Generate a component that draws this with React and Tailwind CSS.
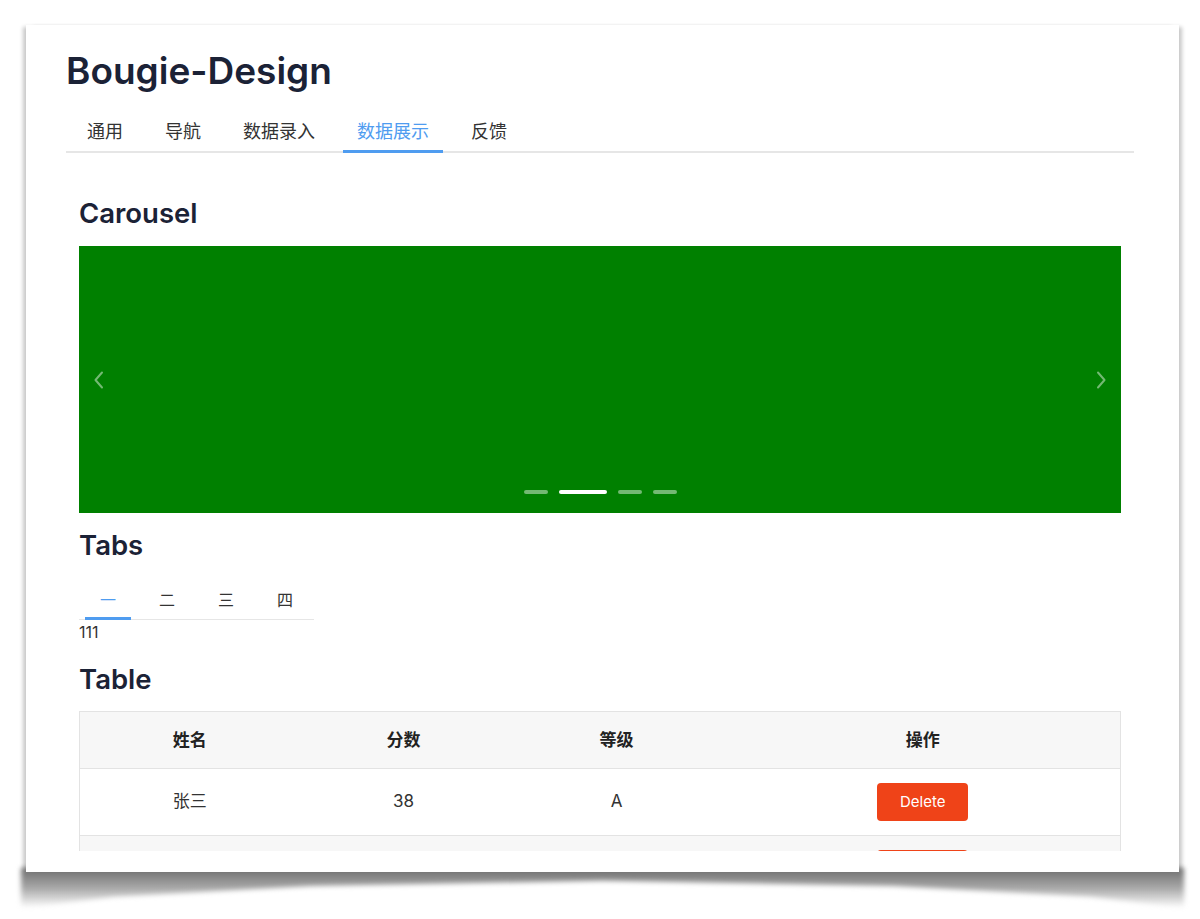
import React, { useState } from 'react';

const navItems = ['通用', '导航', '数据录入', '数据展示', '反馈'];
const tabItems = ['一', '二', '三', '四'];
const rows = [
  { name: '张三', score: 38, level: 'A' },
  { name: '李四', score: 92, level: 'B' },
];

const Chevron = ({ dir }) => (
  <svg width="12" height="18" viewBox="0 0 12 18" fill="none" stroke="rgba(255,255,255,0.45)" strokeWidth="2" strokeLinecap="round" strokeLinejoin="round">
    <path d={dir === 'left' ? 'M9 1.5 L2.5 9 L9 16.5' : 'M3 1.5 L9.5 9 L3 16.5'} />
  </svg>
);

const Carousel = () => {
  const [active, setActive] = useState(1);
  return (
    <div className="relative mt-[16px] h-[267px] bg-[#008000] flex items-center justify-between px-[14px]">
      <button onClick={() => setActive((active + 3) % 4)}>
        <Chevron dir="left" />
      </button>
      <button onClick={() => setActive((active + 1) % 4)}>
        <Chevron dir="right" />
      </button>
      <div className="absolute left-0 right-0 bottom-[19px] flex justify-center gap-[11px]">
        {[0, 1, 2, 3].map((i) => (
          <span
            key={i}
            onClick={() => setActive(i)}
            className={
              i === active
                ? 'h-[4px] w-[48px] rounded-full bg-white'
                : 'h-[4px] w-[24px] rounded-full bg-[rgba(255,255,255,0.45)]'
            }
          />
        ))}
      </div>
    </div>
  );
};

const Tabs = () => {
  const [active, setActive] = useState(0);
  return (
    <div>
      <div className="mt-[26px] inline-flex gap-[13px] pl-[6px] pr-[6px] border-b border-[#e6e6e6]">
        {tabItems.map((t, i) => (
          <button
            key={t}
            onClick={() => setActive(i)}
            className={
              i === active
                ? 'w-[46px] pb-[5px] -mb-[1px] border-b-[3px] border-[#4f9cf0] text-[16px] leading-[24px] text-[#4f9cf0]'
                : 'w-[46px] pb-[5px] -mb-[1px] border-b-[3px] border-transparent text-[16px] leading-[24px] text-[#333]'
            }
          >
            {t}
          </button>
        ))}
      </div>
      <div className="text-[16px] leading-[24px] text-[#333]">{['111', '222', '333', '444'][active]}</div>
    </div>
  );
};

const Table = () => (
  <table className="mt-[15px] w-full table-fixed border-collapse border border-[#e3e3e3] text-[17px] text-[#333]">
    <colgroup>
      <col className="w-[220px]" />
      <col className="w-[208px]" />
      <col className="w-[218px]" />
      <col />
    </colgroup>
    <thead>
      <tr className="bg-[#f7f7f7]">
        {['姓名', '分数', '等级', '操作'].map((h) => (
          <th key={h} className="py-[16px] leading-[24px] font-semibold text-[#222] border-b border-[#e3e3e3]">
            {h}
          </th>
        ))}
      </tr>
    </thead>
    <tbody>
      {rows.map((r, i) => (
        <tr key={r.name} className={i % 2 === 1 ? 'bg-[#f7f7f7]' : 'bg-white'}>
          <td className="text-center py-[14px] border-b border-[#e3e3e3]">{r.name}</td>
          <td className="text-center py-[14px] border-b border-[#e3e3e3]">{r.score}</td>
          <td className="text-center py-[14px] border-b border-[#e3e3e3]">{r.level}</td>
          <td className="text-center py-[14px] border-b border-[#e3e3e3]">
            <button className="h-[38px] w-[91px] rounded-[4px] bg-[#ef4318] text-[15px] text-white">Delete</button>
          </td>
        </tr>
      ))}
    </tbody>
  </table>
);

export default function App() {
  const [nav, setNav] = useState(3);
  return (
    <div className="min-h-[919px] bg-white pt-[25px] pl-[26px] font-['Inter','Noto_Sans_CJK_SC',sans-serif]">
      <div className="relative w-[1153px] pb-[21px]">
        <div className="absolute top-[calc(100%-4px)] left-[-5px] right-[-5px] h-[40px] blur-[2.5px]">
          <div className="h-full bg-linear-to-b from-[#6e6e6e] via-[#a8a8a8] to-[#ffffff00] [clip-path:polygon(0_0,100%_0,100%_100%,92%_72%,75%_45%,50%_32%,25%_45%,8%_72%,0_100%)]" />
        </div>
        <div className="absolute inset-0 bg-white shadow-[-5px_0_4px_-2px_rgba(0,0,0,0.22),5px_0_4px_-2px_rgba(0,0,0,0.22)]" />
        <div className="relative h-[826px] overflow-hidden pl-[40px] pr-[45px] pt-[23px]">
          <h1 className="text-[37px] leading-[46px] font-semibold text-[#1b2236]">Bougie-Design</h1>

          <div className="mt-[26px] flex gap-[14px] pl-[7px] border-b-2 border-[#e6e6e6]">
            {navItems.map((n, i) => (
              <button
                key={n}
                onClick={() => setNav(i)}
                className={
                  i === nav
                    ? 'px-[14px] pb-[6px] -mb-[2px] border-b-[3px] border-[#4f9cf0] text-[18px] leading-[24px] text-[#4f9cf0]'
                    : 'px-[14px] pb-[6px] -mb-[2px] border-b-[3px] border-transparent text-[18px] leading-[24px] text-[#333]'
                }
              >
                {n}
              </button>
            ))}
          </div>

          <div className="px-[13px]">
            <h2 className="mt-[43px] text-[27.5px] leading-[34px] font-semibold text-[#1b2236]">Carousel</h2>
            <Carousel />

            <h2 className="mt-[15px] text-[27.5px] leading-[34px] font-semibold text-[#1b2236]">Tabs</h2>
            <Tabs />

            <h2 className="mt-[18px] text-[27.5px] leading-[34px] font-semibold text-[#1b2236]">Table</h2>
            <Table />
          </div>
        </div>
      </div>
    </div>
  );
}
